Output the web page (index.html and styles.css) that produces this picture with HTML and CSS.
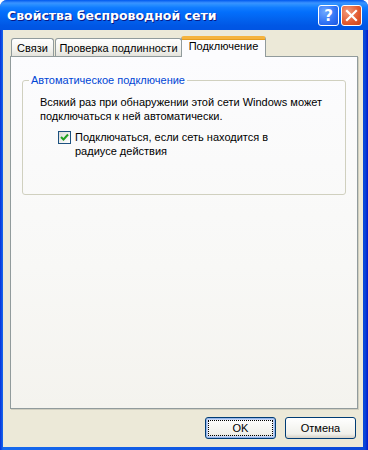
FILE: index.html
```html
<!DOCTYPE html>
<html lang="ru">
<head>
<meta charset="utf-8">
<link rel="stylesheet" href="styles.css">
</head>
<body>
<div class="window">
  <div class="titlebar">
    <span class="title">Свойства беспроводной сети</span>
    <div class="tbtns">
      <div class="tbtn help">?</div>
      <div class="tbtn close">
        <svg width="13" height="13" viewBox="0 0 13 13"><path d="M2 2 L11 11 M11 2 L2 11" stroke="#fff" stroke-width="2.2" stroke-linecap="square"/></svg>
      </div>
    </div>
  </div>
  <div class="frame">
    <div class="tabs">
      <div class="tab t1">Связи</div>
      <div class="tab t2">Проверка подлинности</div>
      <div class="tab t3 active">Подключение</div>
    </div>
    <div class="panel">
      <fieldset class="group">
        <legend>Автоматическое подключение</legend>
        <p class="desc">Всякий раз при обнаружении этой сети Windows может подключаться к ней автоматически.</p>
        <label class="check">
          <span class="box"><svg width="9" height="9" viewBox="0 0 9 9"><path d="M1 4 L3.5 6.5 L8 1.5" fill="none" stroke="#21A121" stroke-width="2"/></svg></span>
          <span class="ctext">Подключаться, если сеть находится в<br>радиусе действия</span>
        </label>
      </fieldset>
    </div>
    <div class="buttons">
      <button class="btn default"><span class="focus">OK</span></button>
      <button class="btn">Отмена</button>
    </div>
  </div>
</div>
</body>
</html>
```
FILE: styles.css
```css
html, body { margin: 0; padding: 0; }
body { width: 368px; height: 450px; background: #fff; font-family: "Liberation Sans", Arial, sans-serif; font-size: 11px; color: #000; }
.window {
  width: 368px; height: 450px; box-sizing: border-box;
  background: linear-gradient(to right, #0831D9, #166AEE 3px, #0A47D7 365px, #0019CF);
  border-radius: 7px 7px 0 0;
  display: flex; flex-direction: column;
  overflow: hidden;
}
.titlebar {
  height: 30px; flex: none;
  background: linear-gradient(to bottom, #0058EE 0%, #3A93FF 10%, #288EFF 16%, #127DFF 25%, #036FFC 40%, #0262EE 65%, #0057E5 85%, #0054E3 100%);
  display: flex; align-items: center; justify-content: space-between;
  padding: 0 6px 0 7px;
}
.title {
  color: #fff; font-family: "DejaVu Sans", sans-serif; font-weight: bold; font-size: 12.5px;
  text-shadow: 1px 1px 0 #0A1883;
  margin-top: 1px;
}
.tbtns { display: flex; gap: 2px; margin-top: 1px; }
.tbtn {
  width: 21px; height: 21px; box-sizing: border-box; border: 1px solid #fff; border-radius: 3px;
  display: flex; align-items: center; justify-content: center;
  color: #fff; font-family: "DejaVu Sans", sans-serif; font-weight: bold; font-size: 15px;
}
.help { background: radial-gradient(circle at 30% 30%, #6EA8FF, #2F71F5 60%, #1A55E0); }
.close { background: radial-gradient(circle at 30% 30%, #F29A7C, #E2592F 60%, #CC4418); }
.frame {
  flex: 1; margin: 0 5px 4px 3px; background: #ECE9D8;
  padding: 5px 0 8px 7px;
  display: flex; flex-direction: column;
}
.tabs { display: flex; align-items: flex-end; height: 21px; padding-left: 1px; }
.tab {
  height: 18px; box-sizing: border-box;
  border: 1px solid #919B9C; border-bottom: none; border-radius: 3px 3px 0 0;
  background: linear-gradient(to bottom, #FFFFFF, #F3F3EF 60%, #E4E3DC);
  display: flex; align-items: center; justify-content: center;
  padding-top: 1px;
  margin-right: 1px;
}
.t1 { width: 43px; }
.t2 { width: 127px; margin-right: 0; }
.t3 { width: 85px; }
.tab.active {
  height: 21px; background: #FCFCFE; border-top: 3px solid #F5B33D;
  box-shadow: inset 0 1px 0 #E69D1F;
  position: relative; top: 1px; margin-left: -1px;
  align-items: flex-start; padding-top: 1px;
}
.panel {
  width: 348px; height: 353px; box-sizing: border-box;
  border: 1px solid #919B9C;
  box-shadow: 1px 1px 0 #D0CEBF;
  background: linear-gradient(to bottom, #FCFCFE 0%, #F8F8F6 60%, #F4F3EE 100%);
  padding: 17px 12px 0 11px;
}
.group {
  margin: 0; height: 121px; box-sizing: border-box;
  border: 1px solid #D0D0BF; border-radius: 3px;
  padding: 9px 10px 0 17px;
  width: 324px;
}
.group legend { color: #0046D5; padding: 0 2px; margin-left: -11px; }
.desc { margin: 0; line-height: 14px; }
.check { display: flex; margin-top: 7px; margin-left: 18px; line-height: 14px; }
.box {
  width: 13px; height: 13px; box-sizing: border-box; flex: none;
  border: 1px solid #1C5180; background: linear-gradient(135deg, #DCDCD7, #FFFFFF);
  display: flex; align-items: center; justify-content: center; margin-right: 4px; margin-top: 1px;
}
.buttons { display: flex; justify-content: flex-end; gap: 9px; padding-right: 7px; margin-top: 8px; }
.btn {
  width: 71px; height: 22px; box-sizing: border-box;
  border: 1px solid #003C74; border-radius: 3px;
  background: linear-gradient(to bottom, #FFFFFF, #F0F0EA 80%, #D6D0C5);
  font-family: "Liberation Sans", Arial, sans-serif; font-size: 11px; color: #000;
  padding: 0; display: flex; align-items: center; justify-content: center;
}
.btn.default { box-shadow: inset 0 0 0 1px #98B8EA, inset 0 0 0 2px #C6D6F5; }
.focus { display: flex; align-items: center; justify-content: center; width: 63px; height: 14px; border: 1px dotted #000; }
```
